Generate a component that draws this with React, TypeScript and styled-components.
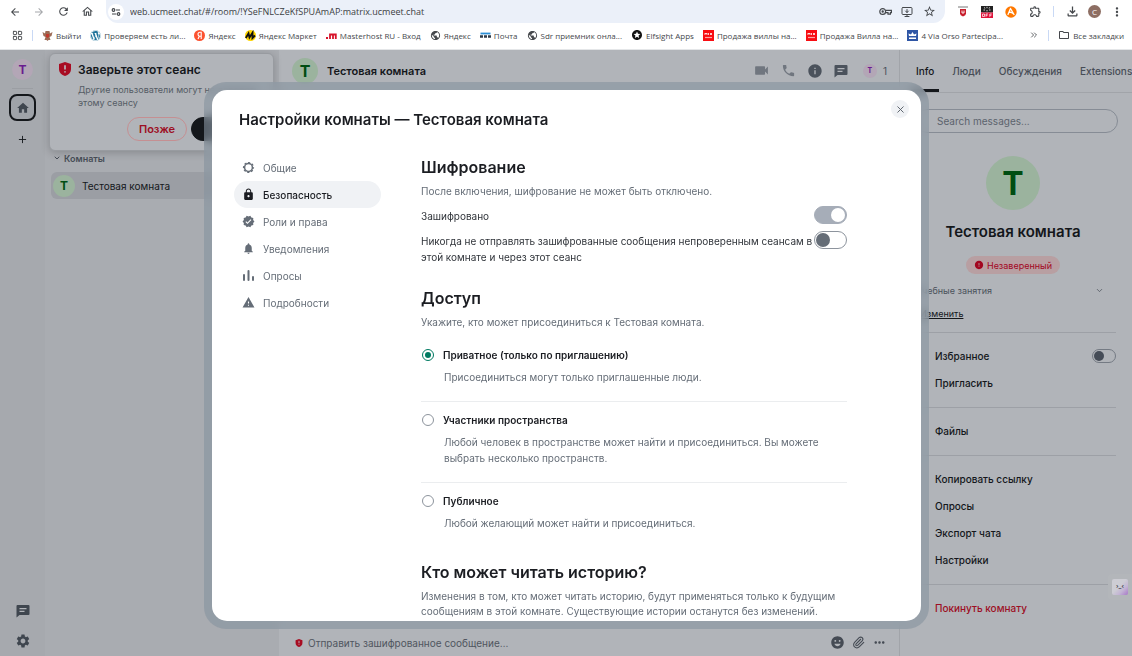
import React, { useState } from 'react';
import styled, { createGlobalStyle, css } from 'styled-components';
import {
  MdArrowBack, MdArrowForward, MdRefresh, MdOutlineHome, MdStarOutline, MdOutlineExtension,
  MdMoreVert, MdPublic, MdSettings, MdLock, MdVerified, MdNotifications, MdWarning, MdVideocam,
  MdPhone, MdInfo, MdError, MdEmojiEmotions, MdMoreHoriz, MdOutlineFolder, MdOutlineKey,
  MdStars, MdOutlineFileDownload, MdHome,
} from 'react-icons/md';
import { FaWordpress } from 'react-icons/fa';
import { ChevronDown, Paperclip, X, Plus, ChevronsRight, MonitorDown, LayoutGrid } from 'lucide-react';

const ink = '#14171b';
const dim = '#474e57';
const panel = '#b1b4b9';

const Global = createGlobalStyle`
  *, *::before, *::after { box-sizing: border-box; }
  html, body, #root { height: 100%; }
  body { margin: 0; overflow: hidden; font-family: Inter, "Liberation Sans", sans-serif; color: ${ink}; }
  button { font: inherit; color: inherit; border: 0; background: none; padding: 0; cursor: pointer; }
  input { margin: 0; font: inherit; }
  h1, h2, p { margin: 0; }
  svg { display: block; flex: none; }
`;

const Page = styled.div`
  display: flex;
  flex-direction: column;
  height: 100vh;
`;

/* ---------- browser chrome ---------- */
const Chrome = styled.header`
  flex: none;
  background: #fff;
  border-bottom: 1px solid #e4e6e8;
  font-family: "Open Sans", "Noto Sans", sans-serif;
  color: #45484c;
`;
const AddressRow = styled.div`
  display: flex;
  align-items: center;
  height: 23px;
  padding: 0 7px;
`;
const NavButtons = styled.div`
  display: flex;
  width: 99px;
  gap: 8px;
`;
const ChromeButton = styled.button<{ $muted?: boolean }>`
  display: grid;
  place-items: center;
  width: 16px;
  height: 16px;
  color: ${p => (p.$muted ? '#a6a8ab' : '#45484c')};
`;
const AddressBar = styled.div`
  flex: 1;
  display: flex;
  align-items: center;
  gap: 6px;
  height: 23px;
  padding: 0 8px 0 2px;
  border-radius: 0 0 12px 12px;
  background: #ebf0f9;
`;
const SiteInfo = styled.span`
  display: grid;
  place-items: center;
  width: 16px;
  height: 16px;
  border-radius: 50%;
  background: #fff;
`;
const Url = styled.input`
  flex: 1;
  min-width: 0;
  padding: 0;
  border: 0;
  outline: 0;
  background: none;
  font-size: 9px;
  color: #3c4043;
`;
const Extensions = styled.div`
  display: flex;
  align-items: center;
  gap: 8px;
  padding-left: 10px;
`;
const Tick = styled.span<{ $flush?: boolean }>`
  flex: none;
  width: 1px;
  height: 11px;
  margin: 0 ${p => (p.$flush ? 0 : 2)}px;
  background: #c9d9f5;
`;
const Profile = styled.span`
  display: grid;
  place-items: center;
  width: 13px;
  height: 13px;
  border-radius: 50%;
  background: #8d6e63;
  color: #fff;
  font-size: 8px;
`;
const Bookmarks = styled.nav`
  display: flex;
  align-items: center;
  gap: 9px;
  height: 26px;
  padding: 0 8px 2px 12px;
  font-size: 8px;
  white-space: nowrap;
`;
const Bookmark = styled.a`
  display: flex;
  align-items: center;
  gap: 3px;
  color: inherit;
  text-decoration: none;
`;
const Spacer = styled.span`
  flex: 1;
`;

/* ---------- application ---------- */
const Workspace = styled.div`
  position: relative;
  flex: 1;
  min-height: 0;
  display: flex;
  overflow: hidden;
  background: ${panel};
`;
const Rail = styled.aside`
  display: flex;
  flex-direction: column;
  align-items: center;
  width: 45px;
  padding: 9px 0 0;
  background: #a6a9ae;
  color: #3f464f;
`;
const Avatar = styled.span<{ $size: number; $font: number; $pink?: boolean }>`
  flex: none;
  display: grid;
  place-items: center;
  width: ${p => p.$size}px;
  height: ${p => p.$size}px;
  border-radius: 50%;
  font-size: ${p => p.$font}px;
  font-weight: 700;
  background: ${p => (p.$pink ? '#b3a6b6' : '#9bb39e')};
  color: ${p => (p.$pink ? '#6a1b8f' : '#004d12')};
`;
const RailRule = styled.span`
  width: 21px;
  height: 1px;
  margin: 8px 0 5px;
  background: #9b9ea3;
`;
const HomeButton = styled.button`
  display: grid;
  place-items: center;
  width: 27px;
  height: 27px;
  margin-bottom: 3px;
  border: 2px solid ${ink};
  border-radius: 8px;
  background: #9fa3a9;
`;
const RailButton = styled.button`
  display: grid;
  place-items: center;
  width: 28px;
  height: 30px;
`;

const RoomList = styled.aside`
  width: 234px;
  padding: 100px 0 0 6px;
  background: #a9acb1;
`;
const SectionTitle = styled.button`
  display: flex;
  align-items: center;
  gap: 3px;
  height: 16px;
  padding-left: 2px;
  font-size: 9px;
  font-weight: 600;
  color: ${dim};
`;
const RoomRow = styled.button`
  display: flex;
  align-items: center;
  gap: 7px;
  width: 100%;
  height: 27px;
  margin-top: 6px;
  padding-left: 2px;
  border-radius: 6px;
  background: #9b9ea4;
  font-size: 10px;
`;

const Toast = styled.section`
  position: absolute;
  top: 3px;
  left: 49px;
  width: 225px;
  height: 98px;
  padding: 8px;
  border: 1px solid #989ba0;
  border-radius: 6px;
  background: ${panel};
  box-shadow: 0 2px 8px rgba(0, 0, 0, 0.2);
`;
const ToastTitle = styled.h2`
  display: flex;
  align-items: center;
  gap: 6px;
  height: 14px;
  font-size: 12px;
  font-weight: 600;
`;
const ToastText = styled.p`
  margin: 7px 0 8px 20px;
  width: 196px;
  font-size: 9px;
  line-height: 13px;
  color: #555c65;
`;
const ToastActions = styled.div`
  display: flex;
  gap: 4px;
  padding-left: 69px;
`;
const PillButton = styled.button<{ $solid?: boolean }>`
  flex: none;
  width: ${p => (p.$solid ? 74 : 60)}px;
  height: 24px;
  border: 1px solid ${p => (p.$solid ? ink : '#c58f92')};
  border-radius: 12px;
  background: ${p => (p.$solid ? ink : 'none')};
  color: ${p => (p.$solid ? panel : '#9d0f24')};
  font-size: ${p => (p.$solid ? 10 : 11)}px;
  font-weight: 600;
`;

const Main = styled.main`
  flex: 1;
  min-width: 0;
  display: flex;
  flex-direction: column;
`;
const RoomHeader = styled.header`
  display: flex;
  align-items: center;
  gap: 9px;
  height: 42px;
  padding: 0 12px 0 13px;
  border-bottom: 1px solid #a1a4a9;
`;
const RoomName = styled.h1`
  flex: 1;
  font-size: 11px;
  font-weight: 600;
`;
const HeaderTools = styled.div`
  display: flex;
  align-items: center;
  gap: 11px;
  color: #4b525c;
  font-size: 10px;
`;
const IconButton = styled.button<{ $soft?: boolean }>`
  color: ${p => (p.$soft ? '#70767f' : 'inherit')};
`;
const Members = styled.button`
  display: flex;
  align-items: center;
  gap: 6px;
  padding-left: 4px;
`;
const Composer = styled.form`
  display: flex;
  align-items: center;
  gap: 7px;
  height: 27px;
  margin-top: auto;
  padding: 0 12px 0 16px;
  color: #454b54;
`;
const ComposerInput = styled.input`
  flex: 1;
  min-width: 0;
  margin-left: -2px;
  padding: 0;
  border: 0;
  outline: 0;
  background: none;
  font-size: 10px;
  &::placeholder { color: #50565f; opacity: 1; }
`;

const Side = styled.aside`
  width: 233px;
  border-left: 1px solid #a1a4a9;
  overflow: hidden;
`;
const Tabs = styled.nav`
  display: flex;
  gap: 8px;
  height: 43px;
  padding-left: 11px;
  border-bottom: 1px solid #a1a4a9;
  font-size: 10px;
  font-weight: 500;
  color: #474d56;
`;
const Tab = styled.button<{ $active?: boolean }>`
  padding: 0 5px;
  border-bottom: 3px solid ${p => (p.$active ? ink : 'transparent')};
  border-top: 3px solid transparent;
  ${p => p.$active && css`color: ${ink};`}
`;
const Search = styled.input`
  display: block;
  width: 203px;
  height: 24px;
  margin: 16px 0 0 15px;
  padding: 0 21px;
  border: 1px solid #868c95;
  border-radius: 12px;
  background: none;
  font-size: 10px;
  &::placeholder { color: #5c636d; opacity: 1; }
`;
const RoomCard = styled.section`
  display: flex;
  flex-direction: column;
  align-items: center;
  padding: 23px 6px 0 0;
`;
const RoomCardName = styled.h2`
  margin-top: 11px;
  font-size: 15px;
  line-height: 22px;
  font-weight: 600;
`;
const Badge = styled.span`
  display: flex;
  align-items: center;
  gap: 3px;
  height: 18px;
  margin-top: 13px;
  padding: 0 8px;
  border-radius: 9px;
  background: #b89fa2;
  color: #a3061f;
  font-size: 9px;
`;
const Topic = styled.div`
  display: flex;
  justify-content: space-between;
  align-items: center;
  height: 14px;
  margin: 9px 28px 0 17px;
  font-size: 9px;
  color: #4b525b;
`;
const EditLink = styled.a`
  display: block;
  margin: 10px 0 12px 20px;
  height: 13px;
  font-size: 9px;
  line-height: 13px;
  color: ${ink};
`;
const MenuGroup = styled.div`
  margin: 0 16px 0 15px;
  padding: 9px 0 11px;
  border-top: 1px solid #9da0a6;
`;
const MenuItem = styled.button<{ $danger?: boolean }>`
  display: flex;
  align-items: center;
  width: 100%;
  height: 27px;
  padding-left: 20px;
  font-size: 10px;
  font-weight: 500;
  color: ${p => (p.$danger ? '#9d0f24' : ink)};
`;
const MenuLabel = styled.label`
  display: flex;
  align-items: center;
  justify-content: space-between;
  height: 27px;
  padding-left: 20px;
  font-size: 10px;
  font-weight: 500;
`;
const Assistant = styled.button`
  position: absolute;
  right: 0;
  bottom: 56px;
  display: grid;
  place-items: center;
  width: 24px;
  height: 26px;
  border-radius: 4px 0 0 4px;
  background: #b3b6ba;
`;
const AssistantFace = styled.span`
  width: 16px;
  height: 16px;
  border-radius: 2px;
  background: linear-gradient(135deg, #cdcdd4 45%, #c3b4d4 70%, #a878c8);
  color: #3c3c48;
  font-size: 6px;
  line-height: 13px;
  font-weight: 600;
`;

/* ---------- dialog ---------- */
const Overlay = styled.div`
  position: absolute;
  inset: 0;
  display: flex;
  padding: 32px 203px 27px 204px;
`;
const Frame = styled.div`
  flex: 1;
  display: flex;
  min-width: 0;
  padding: 8px;
  border-radius: 22px;
  background: rgba(134, 146, 158, 0.6);
  backdrop-filter: blur(5px);
`;
const Dialog = styled.section`
  flex: 1;
  min-width: 0;
  display: flex;
  flex-direction: column;
  border-radius: 15px;
  background: #fff;
  color: #1b1d22;
  overflow: hidden;
`;
const DialogHead = styled.header`
  display: flex;
  justify-content: space-between;
  height: 66px;
  padding: 10px 12px 0 27px;
`;
const DialogTitle = styled.h1`
  padding-top: 9px;
  font-size: 15px;
  line-height: 22px;
  font-weight: 600;
`;
const Close = styled.button`
  display: grid;
  place-items: center;
  width: 18px;
  height: 18px;
  border-radius: 50%;
  background: #f0f2f5;
  color: #525a64;
`;
const DialogBody = styled.div`
  flex: 1;
  min-height: 0;
  display: flex;
  gap: 40px;
  padding-left: 22px;
`;
const SettingsNav = styled.nav`
  flex: none;
  width: 147px;
  margin-top: -2px;
`;
const SettingsTab = styled.button<{ $active?: boolean }>`
  display: flex;
  align-items: center;
  gap: 8px;
  width: 100%;
  height: 27px;
  padding-left: 8px;
  border-radius: 14px;
  font-size: 10px;
  color: #656d77;
  ${p => p.$active && css`background: #f0f2f5; color: #1b1d22; font-weight: 500;`}
`;
const Content = styled.div`
  flex: 1;
  min-width: 0;
  padding-right: 74px;
  overflow: hidden;
`;
const SectionHeading = styled.h2`
  height: 22px;
  font-size: 16px;
  line-height: 22px;
  font-weight: 600;
`;
const Hint = styled.p`
  margin-top: 6px;
  font-size: 10px;
  line-height: 15px;
  color: #656d77;
`;
const Setting = styled.label`
  display: flex;
  justify-content: space-between;
  margin-top: 7px;
  font-size: 10px;
  line-height: 16px;
  color: #30343a;
`;
const SettingText = styled.span`
  padding-top: 2px;
`;
const Block = styled.section`
  margin-bottom: 22px;
`;
const Switch = styled.input.attrs({ type: 'checkbox', role: 'switch' })<{ $small?: boolean }>`
  appearance: none;
  flex: none;
  display: flex;
  align-items: center;
  width: ${p => (p.$small ? 24 : 33)}px;
  height: ${p => (p.$small ? 14 : 18)}px;
  padding: 1px;
  border: 1px solid ${p => (p.$small ? '#747a83' : '#8d949d')};
  border-radius: 9px;
  &::before {
    content: '';
    width: ${p => (p.$small ? 10 : 14)}px;
    height: ${p => (p.$small ? 10 : 14)}px;
    border-radius: 50%;
    background: ${p => (p.$small ? '#454c57' : '#656d77')};
  }
  &:checked {
    justify-content: flex-end;
    border-color: #a6adb8;
    background: #a6adb8;
  }
  &:checked::before { background: #fff; }
`;
const Option = styled.div`
  padding: 17px 0 16px;
  & + & { border-top: 1px solid #ebedef; padding-top: 10px; }
  &:last-child { padding-bottom: 8px; }
`;
const OptionLabel = styled.label`
  display: flex;
  align-items: center;
  gap: 9px;
  height: 16px;
  padding-left: 1px;
  font-size: 10px;
  font-weight: 600;
`;
const Radio = styled.input.attrs({ type: 'radio' })`
  appearance: none;
  display: grid;
  place-items: center;
  width: 12px;
  height: 12px;
  border: 1px solid #8d949d;
  border-radius: 50%;
  &:checked { border-color: #007a61; }
  &:checked::before {
    content: '';
    width: 6px;
    height: 6px;
    border-radius: 50%;
    background: #007a61;
  }
`;
const OptionText = styled.p`
  margin: 6px 0 0 23px;
  font-size: 10px;
  line-height: 16px;
  color: #656d77;
`;

/* ---------- drawings ---------- */
const Shield = ({ size }: { size: number }) => (
  <svg width={size} height={size} viewBox="0 0 14 14">
    <path d="M7 0 13 2v5c0 3.500-2.500 6-6 7-3.500-1-6-3.500-6-7V2Z" fill="#a80c22" />
    <path d="M7 3.200v4.300M7 9.300v1.300" stroke="#b9bcc1" strokeWidth="1.600" />
  </svg>
);
const ChatIcon = ({ size = 14 }: { size?: number }) => (
  <svg width={size} height={size} viewBox="0 0 14 14">
    <path d="M1.500 1h11q1 0 1 1v8q0 1-1 1H3.500L.5 13.500V2q0-1 1-1Z" fill="currentColor" />
    <path d="M3.500 4.600h7M3.500 7.300h5" stroke={panel} strokeWidth="1.200" />
  </svg>
);
const PollIcon = () => (
  <svg width="13" height="13" viewBox="0 0 13 13" fill="currentColor">
    <rect x="1" y="5" width="2" height="7" rx="1" />
    <rect x="5.500" y="1" width="2" height="11" rx="1" />
    <rect x="10" y="7" width="2" height="5" rx="1" />
  </svg>
);
const GearOutline = () => (
  <svg width="13" height="13" viewBox="0 0 13 13" fill="none" stroke="currentColor">
    <circle cx="6.500" cy="6.500" r="3.900" strokeWidth="1.500" />
    <circle cx="6.500" cy="6.500" r="5" strokeWidth="1.200" strokeDasharray="2.200 1.727" strokeDashoffset="1.100" />
  </svg>
);
const TuneIcon = () => (
  <svg width="10" height="10" viewBox="0 0 10 10" fill="none" stroke="#45484c" strokeWidth="1.200">
    <circle cx="2.500" cy="3" r="1.300" /><path d="M5 3h4M1 7h4" /><circle cx="7.500" cy="7" r="1.300" />
  </svg>
);
const KeyIcon = () => (
  <svg width="13" height="13" viewBox="0 0 13 13" fill="none" stroke="currentColor" strokeWidth="1.200">
    <circle cx="3.700" cy="6.500" r="2.900" />
    <circle cx="3.700" cy="6.500" r=".6" />
    <path d="M6.500 5.400h5.900v2.200h-1v1.600H9V7.600H6.500" />
  </svg>
);
const Eagle = () => (
  <svg width="11" height="11" viewBox="0 0 11 11">
    <path d="M.5 2 3 3.500 3.500 1h4L8 3.500 10.500 2 9.500 6 7.500 7l1 3H6.500L5.500 11l-1-1h-2l1-3-2-1Z" fill="#9c6b55" />
    <path d="M4 4h3v2.500L5.500 8 4 6.500Z" fill="#c33a2e" />
  </svg>
);
const YandexMark = () => (
  <svg width="11" height="11" viewBox="0 0 11 11">
    <circle cx="5.500" cy="5.500" r="5.500" fill="#fc5230" />
    <path d="M7.200 9V2.200H6q-2 0-2 2 0 1.300 1.300 2L4 9M5.300 6.300h1.900" fill="none" stroke="#fff" strokeWidth="1.100" />
  </svg>
);
const MarketMark = () => (
  <svg width="11" height="11" viewBox="0 0 11 11">
    <circle cx="5.500" cy="5.500" r="5.500" fill="#ffd500" />
    <path d="M.8 8 3.500 3.500 4.500 7.500 7.500 2.800 7.500 8 10 5.500" fill="none" stroke="#111" strokeWidth="1.900" />
  </svg>
);
const MasterMark = () => (
  <svg width="11" height="11" viewBox="0 0 11 11" fill="none" stroke="#d8142c" strokeWidth="1.800">
    <path d="M0 8h2M4 9V4.500h5.800V9M7 4.500V9" />
  </svg>
);
const MailMark = () => (
  <svg width="11" height="11" viewBox="0 0 11 11">
    <path d="M.5 3.500h10" stroke="#2b8fd6" strokeWidth="1.800" />
    <path d="M0 6.500h3M4 6.500h3M8 6.500h3" stroke="#2c3a48" strokeWidth="2.400" />
  </svg>
);
const MixMark = () => (
  <svg width="11" height="11" viewBox="0 0 11 11">
    <rect width="11" height="11" fill="#f80d12" />
    <path d="M2 5V3l1 1 1-1v2M5.500 3v2M7 3l2 2M9 3 7 5" fill="none" stroke="#fff" strokeWidth=".8" />
    <path d="M2 7.500h7" stroke="#fca4a4" strokeWidth="1.200" />
  </svg>
);
const CrownMark = () => (
  <svg width="11" height="11" viewBox="0 0 11 11">
    <rect width="11" height="11" fill="#2f56a5" />
    <path d="M2 6 1.500 3.500 4 4.500 5.500 2 7 4.500 9.500 3.500 9 6ZM2 7.500h7V9H2Z" fill="#fff" />
  </svg>
);
const UShield = () => (
  <svg width="12" height="12" viewBox="0 0 12 12">
    <path d="M1 1h10" stroke="#777" />
    <path d="M3 3h6v4.500q0 2-3 3-3-1-3-3Z" fill="#c81e2c" />
    <path d="M5 4.500V7h2V4.500" fill="none" stroke="#fff" strokeWidth=".9" />
  </svg>
);
const OffMark = () => (
  <svg width="12" height="12" viewBox="0 0 12 12">
    <rect width="12" height="6.500" fill="#222" />
    <path d="M6 .8v1.400M6 4v1.400M3 1.500l1.200.8M9 1.500l-1.200.8M2.500 4h1.500M8 4h1.500" stroke="#fff" strokeWidth=".8" />
    <rect y="6.500" width="12" height="5.500" fill="#e0143c" />
    <path d="M1.500 8h2v2.500h-2ZM7 8H5v2.800M5 9.300h1.600M10.800 8H8.800v2.800M8.800 9.300h1.600" fill="none" stroke="#fff" strokeWidth=".7" />
  </svg>
);
const AvastMark = () => (
  <svg width="12" height="12" viewBox="0 0 12 12">
    <circle cx="6" cy="6" r="5.700" fill="#ff7800" />
    <path d="M5.500 2.500 3 8.500M5.500 2.500 9 8.500M4 6.500q3-1 5 2" fill="none" stroke="#fff" strokeWidth="1.300" strokeLinecap="round" />
  </svg>
);

const bookmarks: [React.ReactNode, string][] = [
  [<Eagle />, 'Выйти'],
  [<FaWordpress size={11} color="#21759b" />, 'Проверяем есть ли...'],
  [<YandexMark />, 'Яндекс'],
  [<MarketMark />, 'Яндекс Маркет'],
  [<MasterMark />, 'Masterhost RU - Вход'],
  [<MdPublic size={11} />, 'Яндекс'],
  [<MailMark />, 'Почта'],
  [<MdPublic size={11} />, 'Sdr приемник онла...'],
  [<MdStars size={12} color="#111" />, 'Elfsight Apps'],
  [<MixMark />, 'Продажа виллы на...'],
  [<MixMark />, 'Продажа Вилла на...'],
  [<CrownMark />, '4 Via Orso Partecipa...'],
];

const settingsTabs: [React.ReactNode, string][] = [
  [<GearOutline />, 'Общие'],
  [<MdLock size={13} />, 'Безопасность'],
  [<MdVerified size={13} />, 'Роли и права'],
  [<MdNotifications size={13} />, 'Уведомления'],
  [<PollIcon />, 'Опросы'],
  [<MdWarning size={13} />, 'Подробности'],
];

const accessOptions = [
  ['Приватное (только по приглашению)', 'Присоединиться могут только приглашенные люди.'],
  ['Участники пространства', 'Любой человек в пространстве может найти и присоединиться. Вы можете выбрать несколько пространств.'],
  ['Публичное', 'Любой желающий может найти и присоединиться.'],
];

export default function App() {
  const [tab, setTab] = useState(1);
  const [access, setAccess] = useState(0);
  return (
    <Page>
      <Global />
      <Chrome>
        <AddressRow>
          <NavButtons>
            <ChromeButton aria-label="Назад"><MdArrowBack size={12} /></ChromeButton>
            <ChromeButton $muted aria-label="Вперёд"><MdArrowForward size={12} /></ChromeButton>
            <ChromeButton aria-label="Обновить"><MdRefresh size={13} /></ChromeButton>
            <ChromeButton aria-label="Главная"><MdOutlineHome size={13} /></ChromeButton>
          </NavButtons>
          <AddressBar>
            <SiteInfo><TuneIcon /></SiteInfo>
            <Url aria-label="Адрес" defaultValue="web.ucmeet.chat/#/room/!YSeFNLCZeKfSPUAmAP:matrix.ucmeet.chat" />
            <ChromeButton aria-label="Пароли"><KeyIcon /></ChromeButton>
            <ChromeButton aria-label="Установить"><MonitorDown size={12} /></ChromeButton>
            <ChromeButton aria-label="В закладки"><MdStarOutline size={13} /></ChromeButton>
          </AddressBar>
          <Extensions>
            <ChromeButton aria-label="Защита"><UShield /></ChromeButton>
            <ChromeButton aria-label="Выключатель"><OffMark /></ChromeButton>
            <ChromeButton aria-label="Антивирус"><AvastMark /></ChromeButton>
            <ChromeButton aria-label="Расширения"><MdOutlineExtension size={13} /></ChromeButton>
            <Tick />
            <ChromeButton aria-label="Загрузки"><MdOutlineFileDownload size={15} /></ChromeButton>
            <Profile>С</Profile>
            <ChromeButton aria-label="Меню"><MdMoreVert size={14} /></ChromeButton>
          </Extensions>
        </AddressRow>
        <Bookmarks>
          <LayoutGrid size={11} />
          <Tick $flush />
          {bookmarks.map(([icon, text], i) => (
            <Bookmark href="#" key={i}>{icon}{text}</Bookmark>
          ))}
          <Spacer />
          <ChevronsRight size={10} />
          <Tick $flush />
          <Bookmark href="#"><MdOutlineFolder size={12} />Все закладки</Bookmark>
        </Bookmarks>
      </Chrome>

      <Workspace>
        <Rail>
          <Avatar $size={21} $font={12} $pink>T</Avatar>
          <RailRule />
          <HomeButton aria-label="Главная"><MdHome size={14} /></HomeButton>
          <RailButton aria-label="Создать"><Plus size={11} color={ink} /></RailButton>
          <Spacer />
          <RailButton aria-label="Обсуждения"><ChatIcon /></RailButton>
          <RailButton aria-label="Настройки"><MdSettings size={16} /></RailButton>
        </Rail>
        <RoomList>
          <SectionTitle><ChevronDown size={8} strokeWidth={3} />Комнаты</SectionTitle>
          <RoomRow><Avatar $size={22} $font={12}>Т</Avatar>Тестовая комната</RoomRow>
        </RoomList>
        <Main>
          <RoomHeader>
            <Avatar $size={26} $font={16}>Т</Avatar>
            <RoomName>Тестовая комната</RoomName>
            <HeaderTools>
              <IconButton $soft aria-label="Видеозвонок"><MdVideocam size={17} /></IconButton>
              <IconButton $soft aria-label="Звонок"><MdPhone size={15} /></IconButton>
              <IconButton aria-label="Сведения"><MdInfo size={16} /></IconButton>
              <IconButton aria-label="Обсуждения"><ChatIcon /></IconButton>
              <Members><Avatar $size={14} $font={7} $pink>T</Avatar>1</Members>
            </HeaderTools>
          </RoomHeader>
          <Composer>
            <Shield size={8} />
            <ComposerInput aria-label="Сообщение" placeholder="Отправить зашифрованное сообщение…" />
            <IconButton type="button" aria-label="Эмодзи"><MdEmojiEmotions size={15} /></IconButton>
            <IconButton type="button" aria-label="Вложение"><Paperclip size={13} /></IconButton>
            <IconButton type="button" aria-label="Ещё"><MdMoreHoriz size={15} /></IconButton>
          </Composer>
        </Main>
        <Side>
          <Tabs>
            <Tab $active>Info</Tab>
            <Tab>Люди</Tab>
            <Tab>Обсуждения</Tab>
            <Tab>Extensions</Tab>
          </Tabs>
          <Search aria-label="Поиск" placeholder="Search messages..." />
          <RoomCard>
            <Avatar $size={54} $font={32}>Т</Avatar>
            <RoomCardName>Тестовая комната</RoomCardName>
            <Badge><MdError size={10} />Незаверенный</Badge>
          </RoomCard>
          <Topic>Учебные занятия<ChevronDown size={9} /></Topic>
          <EditLink href="#">Изменить</EditLink>
          <MenuGroup>
            <MenuLabel>Избранное<Switch $small /></MenuLabel>
            <MenuItem>Пригласить</MenuItem>
          </MenuGroup>
          <MenuGroup><MenuItem>Файлы</MenuItem></MenuGroup>
          <MenuGroup>
            <MenuItem>Копировать ссылку</MenuItem>
            <MenuItem>Опросы</MenuItem>
            <MenuItem>Экспорт чата</MenuItem>
            <MenuItem>Настройки</MenuItem>
          </MenuGroup>
          <MenuGroup><MenuItem $danger>Покинуть комнату</MenuItem></MenuGroup>
        </Side>

        <Toast>
          <ToastTitle><Shield size={14} />Заверьте этот сеанс</ToastTitle>
          <ToastText>Другие пользователи могут не доверять этому сеансу</ToastText>
          <ToastActions>
            <PillButton>Позже</PillButton>
            <PillButton $solid>Далее</PillButton>
          </ToastActions>
        </Toast>

        <Overlay>
          <Frame>
            <Dialog role="dialog" aria-labelledby="dialog-title">
              <DialogHead>
                <DialogTitle id="dialog-title">Настройки комнаты — Тестовая комната</DialogTitle>
                <Close aria-label="Закрыть"><X size={11} /></Close>
              </DialogHead>
              <DialogBody>
                <SettingsNav>
                  {settingsTabs.map(([icon, text], i) => (
                    <SettingsTab key={text} $active={i === tab} onClick={() => setTab(i)}>{icon}{text}</SettingsTab>
                  ))}
                </SettingsNav>
                <Content>
                  <Block>
                    <SectionHeading>Шифрование</SectionHeading>
                    <Hint>После включения, шифрование не может быть отключено.</Hint>
                    <Setting>
                      <SettingText>Зашифровано</SettingText>
                      <Switch defaultChecked />
                    </Setting>
                    <Setting>
                      <SettingText>Никогда не отправлять зашифрованные сообщения непроверенным сеансам в этой комнате и через этот сеанс</SettingText>
                      <Switch />
                    </Setting>
                  </Block>
                  <Block>
                    <SectionHeading>Доступ</SectionHeading>
                    <Hint>Укажите, кто может присоединиться к Тестовая комната.</Hint>
                    <div>
                      {accessOptions.map(([label, text], i) => (
                        <Option key={label}>
                          <OptionLabel>
                            <Radio name="access" checked={access === i} onChange={() => setAccess(i)} />
                            {label}
                          </OptionLabel>
                          <OptionText>{text}</OptionText>
                        </Option>
                      ))}
                    </div>
                  </Block>
                  <Block>
                    <SectionHeading>Кто может читать историю?</SectionHeading>
                    <Hint>Изменения в том, кто может читать историю, будут применяться только к будущим сообщениям в этой комнате. Существующие истории останутся без изменений.</Hint>
                  </Block>
                </Content>
              </DialogBody>
            </Dialog>
          </Frame>
        </Overlay>
        <Assistant aria-label="Помощник"><AssistantFace>›_‹</AssistantFace></Assistant>
      </Workspace>
    </Page>
  );
}
